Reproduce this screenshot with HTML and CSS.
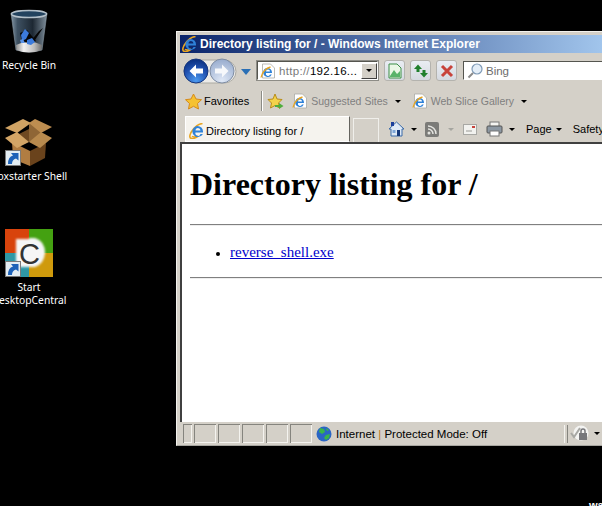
FILE: index.html
```html
<!doctype html>
<html lang="en">
<head>
  <meta charset="utf-8">
  <title>Directory listing for /</title>
  <link rel="stylesheet" href="styles.css">
</head>
<body>

  <!-- desktop icons -->
  <div class="desktop-icon bin">
    <svg class="icon48" viewBox="0 0 48 48">
      <defs>
        <linearGradient id="binBody" x1="0" x2="1" y1="0" y2="0">
          <stop offset="0" stop-color="#8497a6"/><stop offset=".18" stop-color="#3e5162"/><stop offset=".6" stop-color="#1d2833"/><stop offset="1" stop-color="#7f8f9c"/>
        </linearGradient>
        <linearGradient id="binFoot" x1="0" x2="1" y1="0" y2="0">
          <stop offset="0" stop-color="#8f8f8f"/><stop offset=".3" stop-color="#f2f2f2"/><stop offset=".7" stop-color="#bdbdbd"/><stop offset="1" stop-color="#6f6f6f"/>
        </linearGradient>
      </defs>
      <path d="M6 4 L11 41 Q24 45 37 41 L42 4 Z" fill="url(#binBody)" stroke="#8a99a5" stroke-width=".6"/>
      <path d="M11 36 Q24 29 37 36 L36.500 41 Q24 46 11.500 41 Z" fill="url(#binFoot)"/>
      <ellipse cx="24" cy="5" rx="17.500" ry="3.500" fill="#23435f" stroke="#b4c0c9" stroke-width="1.500"/>
      <path d="M15 24 L22 21 L31 32 L26 34 L17 33 Z M34 22 L38 19 L28 34 L25 33 Z" fill="#060606"/>
      <path d="M16 26 L20 20 L24 24 L21 30 L17 32 Z" fill="#3c7bdc"/>
      <path d="M22 31 L27 29 L30 33 L26 36 L22 35 Z" fill="#3c7bdc"/>
      <path d="M15 31 L18 30 L20 34 L16 34 Z" fill="#5a94e8"/>
    </svg>
    <span class="icon-label">Recycle Bin</span>
  </div>

  <div class="desktop-icon box">
    <svg class="icon48" viewBox="0 0 48 48">
      <path d="M7 24 L25 33 L25 48 L8 41 Z" fill="#b17d42"/>
      <path d="M25 33 L41 25 L40 40 L25 48 Z" fill="#6a431c"/>
      <path d="M12 17 L24 11 L36 17 L24 24 Z" fill="#6f4921"/>
      <path d="M24 4 L24 24 L36 17 L36 10 Z" fill="#8f6636"/>
      <path d="M0 10 L18 1 L26 5 L12 15 Z" fill="#d0a364"/>
      <path d="M24 5 L30 1 L47 9 L36 15 Z" fill="#bd8d50"/>
      <path d="M0 20 L12 14 L24 24 L12 30 Z" fill="#d3a566"/>
      <path d="M24 24 L36 14 L47 20 L35 30 Z" fill="#b88a4e"/>
    </svg>
    <svg class="shortcut" viewBox="0 0 16 16"><rect x=".5" y=".5" width="15" height="15" fill="#e3edf2" stroke="#7a7a7a"/><path d="M3 14 Q3 6.500 8 5.500 L6 3 H13.500 V10.500 L11 8.500 Q7 9.500 7 14 Z" fill="#1d62b8"/></svg>
    <span class="icon-label">Boxstarter Shell</span>
  </div>

  <div class="desktop-icon central">
    <svg class="icon48" viewBox="0 0 48 48">
      <defs>
        <filter id="soft"><feGaussianBlur stdDeviation="1"/></filter>
      </defs>
      <rect width="24" height="24" fill="#d8430c"/>
      <rect x="24" width="24" height="24" fill="#44a111"/>
      <rect y="24" width="24" height="24" fill="#2f98a6"/>
      <rect x="24" y="24" width="24" height="24" fill="#cf9a0c"/>
      <path d="M11 10 H24 V9 H30 Q40 12 40 24 Q39 35 30 38 H11 Z" fill="#f6f6f6" filter="url(#soft)"/>
      <text x="14" y="35" class="central-c">C</text>
    </svg>
    <svg class="shortcut" viewBox="0 0 16 16"><rect x=".5" y=".5" width="15" height="15" fill="#e3edf2" stroke="#7a7a7a"/><path d="M3 14 Q3 6.500 8 5.500 L6 3 H13.500 V10.500 L11 8.500 Q7 9.500 7 14 Z" fill="#1d62b8"/></svg>
    <span class="icon-label">Start<br>DesktopCentral</span>
  </div>

  <span class="corner-text">wa</span>

  <!-- the browser window -->
  <div class="window">
    <div class="titlebar">
      <svg class="ie16" viewBox="0 0 16 16"><use href="#ie"/></svg>
      <span>Directory listing for / - Windows Internet Explorer</span>
    </div>

    <div class="navbar">
      <div class="nav-orbs">
        <svg width="54" height="30" viewBox="0 0 54 30">
          <defs>
            <radialGradient id="orbBack" cx=".5" cy=".9" r=".9"><stop offset="0" stop-color="#4c9af0"/><stop offset=".6" stop-color="#1f4fae"/><stop offset="1" stop-color="#0b2f7e"/></radialGradient>
            <radialGradient id="orbFwd" cx=".5" cy=".9" r=".9"><stop offset="0" stop-color="#dfe8f6"/><stop offset="1" stop-color="#98acce"/></radialGradient>
          </defs>
          <rect x="1" y="4" width="52" height="23" rx="11.500" fill="#ecebe8" stroke="#aaa9a2"/>
          <circle cx="13" cy="15" r="12" fill="url(#orbBack)" stroke="#16377f"/>
          <path d="M6.500 15 L13 8.500 V12.500 H20 V17.500 H13 V21.500 Z" fill="#fff"/>
          <circle cx="39" cy="15" r="12" fill="url(#orbFwd)" stroke="#7f8da3"/>
          <path d="M45.500 15 L39 8.500 V12.500 H32 V17.500 H39 V21.500 Z" fill="#f6f8fb"/>
        </svg>
        <svg class="orb-arrow" width="10" height="6" viewBox="0 0 10 6"><path d="M0 0 H10 L5 6 Z" fill="#2a6fb5"/></svg>
      </div>

      <div class="address">
        <svg class="ie16" viewBox="1 0 15 16"><use href="#iedoc"/></svg>
        <span class="url"><span class="url-dim">http://</span>192.16...</span>
        <span class="drop-btn"><i class="caret"></i></span>
      </div>

      <div class="nav-btns">
        <span class="nav-btn"><svg width="16" height="16" viewBox="0 0 16 16"><path d="M2 1 H10 L14 5 V15 H2 Z" fill="#eaf7e6" stroke="#3c8f48"/><path d="M3 13 L7 7 L10 11 L13 8 V14 H3 Z" fill="#59b36a"/></svg></span>
        <span class="nav-btn"><svg width="16" height="16" viewBox="0 0 16 16"><path d="M1 6 L5 1.500 L9 6 H6.500 V9 H3.500 V6 Z" fill="#1f7f2c"/><path d="M15 10 L11 14.500 L7 10 H9.500 V7 H12.500 V10 Z" fill="#1f7f2c"/></svg></span>
        <span class="nav-btn"><svg width="14" height="14" viewBox="0 0 14 14"><path d="M2 2 L12 12 M12 2 L2 12" stroke="#c8433b" stroke-width="3"/></svg></span>
      </div>

      <div class="search">
        <svg width="16" height="16" viewBox="0 0 16 16"><circle cx="10" cy="6" r="5" fill="#e4eef8" stroke="#7f9ab6" stroke-width="1.200"/><path d="M6 10 L1.500 14.500" stroke="#8b8b8b" stroke-width="2"/></svg>
        <span>Bing</span>
      </div>
    </div>

    <div class="favbar">
      <svg width="17" height="17" viewBox="0 0 17 17"><path d="M8.500 1 L11 6 L16.500 6.700 L12.500 10.500 L13.500 16 L8.500 13.300 L3.500 16 L4.500 10.500 L.5 6.700 L6 6 Z" fill="#f5c232" stroke="#d68a1a"/></svg>
      <span class="fav-label">Favorites</span>
      <i class="fav-sep"></i>
      <svg width="17" height="17" viewBox="0 0 17 17"><path d="M8 1 L10 6 L15 6.500 L11.500 10 L12.500 15 L8 12.500 L3.500 15 L4.500 10 L1 6.500 L6 6 Z" fill="#f3d34b" stroke="#b98d1a"/><path d="M8 12 H12 V10 L16.500 13 L12 16 V14 H8 Z" fill="#4fae3c"/></svg>
      <span class="fav-item"><svg class="ie16" viewBox="1 0 15 16"><use href="#iedoc"/></svg>Suggested Sites<i class="caret"></i></span>
      <span class="fav-item"><svg class="ie16" viewBox="1 0 15 16"><use href="#iedoc"/></svg>Web Slice Gallery<i class="caret"></i></span>
    </div>

    <div class="tabbar">
      <div class="tab">
        <svg class="ie16" viewBox="0 0 16 16"><use href="#ie"/></svg>
        <span>Directory listing for /</span>
      </div>
      <div class="new-tab"></div>
      <div class="commands">
        <svg width="17" height="16" viewBox="0 0 17 16"><path d="M8.500 1 L1 8 H3 V15 H14 V8 H16 Z" fill="#dfe9f5" stroke="#3a6aa8"/><rect x="3" y="1" width="3" height="4" fill="#1c3f9c"/><rect x="9" y="9" width="3" height="6" fill="#16397a"/><rect x="4.500" y="9" width="3" height="3" fill="#7fa7d8"/></svg>
        <i class="caret"></i>
        <svg class="feed" width="14" height="15" viewBox="0 0 14 15"><rect width="14" height="15" rx="2" fill="#7b7b78"/><circle cx="4" cy="11" r="1.500" fill="#e4e4e0"/><path d="M3 7 A5 5 0 0 1 8 12 M3 4 A8 8 0 0 1 11 12" fill="none" stroke="#e4e4e0" stroke-width="1.500"/></svg>
        <i class="caret caret-off"></i>
        <svg class="mail" width="14" height="11" viewBox="0 0 14 11"><rect x=".5" y=".5" width="13" height="10" fill="#f2f2ef" stroke="#a8a8a4"/><rect x="9" y="2" width="3" height="2" fill="#c8433b"/><path d="M3 7 H9" stroke="#9a9a96"/></svg>
        <svg class="printer" width="17" height="16" viewBox="0 0 17 16"><rect x="4" y="1" width="9" height="5" fill="#f5f5f2" stroke="#777"/><rect x="1" y="5" width="15" height="7" rx="1" fill="#8d98a3" stroke="#555"/><rect x="4" y="10" width="9" height="5" fill="#fff" stroke="#777"/></svg>
        <i class="caret"></i>
        <span class="cmd page">Page<i class="caret"></i></span>
        <span class="cmd safety">Safety</span>
      </div>
    </div>

    <div class="viewport">
      <h1>Directory listing for /</h1>
      <hr>
      <ul>
        <li><a href="#">reverse_shell.exe</a></li>
      </ul>
      <hr>
    </div>

    <div class="statusbar">
      <i class="pane p1"></i><i class="pane"></i><i class="pane"></i><i class="pane"></i><i class="pane"></i><i class="pane"></i>
      <div class="zone">
        <svg width="16" height="16" viewBox="0 0 16 16"><circle cx="8" cy="8" r="7.500" fill="#2a66c4"/><path d="M4 2 L8 3 L9 6 L6 8 L3 6 Z M10 9 L14 8 L13 12 L10 14 L8 12 Z M10 2 L13 4 L11 5 Z" fill="#39b54a"/></svg>
        <span>Internet <b class="bar">|</b> Protected Mode: Off</span>
      </div>
      <div class="lock">
        <svg width="19" height="18" viewBox="0 0 19 18"><circle cx="11" cy="8" r="7.500" fill="#f4f4f2"/><path d="M1 8 L4 12 L10 3" fill="none" stroke="#a8a8a4" stroke-width="2"/><rect x="9" y="8" width="8" height="7" fill="#77777a"/><path d="M11 8 V6 A2 2 0 0 1 15 6 V8" fill="none" stroke="#77777a" stroke-width="1.500"/></svg>
        <i class="caret"></i>
      </div>
    </div>
  </div>

  <!-- shared IE logo -->
  <svg class="defs" width="0" height="0">
    <defs>
      <g id="ie">
        <path d="M13.500 .8 C10.500 .2 5.500 3.500 2 9.500 C.3 13 .5 15 2.300 15.400 C4.300 15.800 7 14.700 9 13.300 C6.300 14 3.700 14.300 3.200 13" fill="none" stroke="#e8a522" stroke-width="1.600"/>
        <path d="M8.500 3 A5.500 5.500 0 0 1 14 8.500 V9.500 H6.500 A2.500 2.500 0 0 0 11.500 11 H13.800 A5.500 5.500 0 1 1 8.500 3 Z M6.500 7.500 H11.500 A2.500 2.500 0 0 0 6.500 7.500 Z" fill="#2f82d8" fill-rule="evenodd"/>
      </g>
      <g id="iedoc">
        <path d="M3 1 H11 L15 5 V15 H3 Z" fill="#fff" stroke="#a9a9a4" stroke-width=".8"/>
        <path d="M8 5 A4.500 4.500 0 0 1 12.500 9.500 V10 H6.500 A2 2 0 0 0 10.500 11.500 H12.300 A4.500 4.500 0 1 1 8 5 Z M6.500 8.500 H10.500 A2 2 0 0 0 6.500 8.500 Z" fill="#2f82d8" fill-rule="evenodd"/>
        <path d="M1.500 14.500 C2.500 9 7 5 11 4" fill="none" stroke="#e8a522" stroke-width="1.300"/>
      </g>
    </defs>
  </svg>

</body>
</html>
```

FILE: styles.css
```css
html, body {
    margin:0;
    height:100%;
}
body {
    background:#000;
    color:#000;
    font-family:"Liberation Sans", Arial, sans-serif;
    font-size:10.500px;
    overflow:hidden;
    position:relative;
}
svg {
    display:block;
    flex:none;
}
.defs {
    position:absolute;
}

/* desktop icons sit on a free canvas */
.desktop-icon {
    position:absolute;
    width:110px;
    display:flex;
    flex-direction:column;
    align-items:center;
}
.bin {left:-26px; top:9px;}
.box {left:-26px; top:118px;}
.central {left:-26px; top:229px;}
.icon48 {
    width:48px;
    height:48px;
}
.shortcut {
    position:absolute;
    left:31px;
    top:32px;
    width:16px;
    height:16px;
}
.icon-label {
    margin-top:4px;
    color:#fff;
    text-align:center;
    line-height:13px;
    font-family:"Noto Sans", "Liberation Sans", sans-serif;
    font-size:10.300px;
}
.bin .icon-label {
    margin-top:2px;
}
.central-c {
    font-family:"Liberation Sans", sans-serif;
    font-size:29px;
    fill:#333;
}
.corner-text {
    position:absolute;
    left:589px;
    top:499px;
    color:#fff;
    font-weight:bold;
    font-size:11px;
}

/* window */
.window {
    position:absolute;
    left:176px;
    top:31px;
    width:440px;
    height:415px;
    box-sizing:border-box;
    background:#d4d0c8;
    border:1px solid #a7a6a0;
    border-top-color:#f2f1ed;
    border-left-color:#f2f1ed;
    padding:3px 0 0 3px;
    display:flex;
    flex-direction:column;
}
.titlebar {
    height:18px;
    flex:none;
    display:flex;
    align-items:center;
    gap:2px;
    padding-left:2px;
    background:linear-gradient(to right, #0a246a, #a6caf0);
    color:#fff;
    font-weight:bold;
    font-size:12px;
    white-space:nowrap;
}
.ie16 {
    width:16px;
    height:16px;
}

.navbar {
    height:31px;
    flex:none;
    display:flex;
    align-items:center;
    padding:2px 0 0 3px;
}
.nav-orbs {
    display:flex;
    align-items:center;
    gap:4px;
}
.orb-arrow {
    margin-top:2px;
}
.address {
    margin-left:6px;
    width:121px;
    height:19px;
    flex:none;
    box-sizing:border-box;
    display:flex;
    align-items:center;
    gap:3px;
    padding-left:2px;
    background:#fff;
    border:1px solid;
    border-color:#55554f #fff #fff #55554f;
    outline:1px solid #8d8c86;
}
.url {
    flex:1;
    font-size:11.500px;
    white-space:nowrap;
    letter-spacing:.3px;
}
.url-dim {
    color:#7a7a7a;
}
.drop-btn {
    width:16px;
    height:16px;
    box-sizing:border-box;
    display:flex;
    align-items:center;
    justify-content:center;
    background:#d4d0c8;
    border:1px solid;
    border-color:#fff #404040 #404040 #fff;
}
.caret {
    display:inline-block;
    border:solid transparent;
    border-width:3px 3px 0;
    border-top-color:#000;
    width:0;
    height:0;
}
.nav-btns {
    display:flex;
    gap:5px;
    margin-left:6px;
}
.nav-btn {
    width:21px;
    height:21px;
    box-sizing:border-box;
    display:flex;
    align-items:center;
    justify-content:center;
    background:linear-gradient(#e9edf3, #d5d9e0);
    border:1px solid #b4b3ae;
    border-radius:3px;
}
.search {
    margin-left:6px;
    width:250px;
    height:19px;
    flex:none;
    box-sizing:border-box;
    display:flex;
    align-items:center;
    gap:3px;
    padding-left:3px;
    background:#fff;
    border:1px solid;
    border-color:#55554f #fff #fff #55554f;
    color:#6d6d6d;
    font-size:11.500px;
}

.favbar {
    height:30px;
    flex:none;
    display:flex;
    align-items:center;
    padding-left:5px;
    color:#7f7f7f;
}
.fav-label {
    margin-left:2px;
    color:#000;
    font-size:11px;
}
.fav-sep {
    width:1px;
    height:20px;
    margin:0 5px 0 12px;
    background:#8b8b85;
    box-shadow:1px 0 #fff;
}
.fav-item {
    display:flex;
    align-items:center;
    gap:3px;
    margin-left:8px;
}
.fav-item + .fav-item {
    margin-left:11px;
}
.fav-item .caret {
    margin-left:4px;
}

.tabbar {
    height:26px;
    flex:none;
    display:flex;
    align-items:flex-end;
    padding-left:5px;
}
.tab {
    width:165px;
    height:26px;
    box-sizing:border-box;
    display:flex;
    align-items:center;
    gap:1px;
    padding:3px 0 0 3px;
    background:#f5f3ee;
    border:1px solid #fff;
    border-right-color:#65645f;
    font-size:11px;
}
.new-tab {
    width:26px;
    height:24px;
    margin-left:3px;
    box-sizing:border-box;
    border:1px solid #f0efeb;
    border-bottom:0;
    background:#d4d0c8;
}
.commands {
    display:flex;
    align-items:center;
    align-self:center;
    margin-left:9px;
    font-size:11px;
    white-space:nowrap;
}
.commands .caret {
    margin-left:6px;
}
.commands .feed {
    margin-left:8px;
}
.commands .caret-off {
    margin-left:9px;
    border-top-color:#a5a5a0;
}
.commands .mail {
    margin-left:9px;
}
.commands .printer {
    margin-left:9px;
}
.cmd {
    display:flex;
    align-items:center;
    margin-left:11px;
}
.commands .cmd .caret {
    margin-left:4px;
}

.viewport {
    flex:1;
    min-height:0;
    box-sizing:border-box;
    padding:8px;
    background:#fff;
    border-top:2px solid #404040;
    border-left:2px solid #404040;
    font-family:"Liberation Serif", "Times New Roman", serif;
    font-size:15px;
}
.viewport h1 {
    margin:14px 0 21px;
    font-size:32px;
    line-height:37px;
}
.viewport hr {
    margin:0;
    border:0;
    border-top:1px solid #808080;
    border-bottom:1px solid #eee;
}
.viewport ul {
    margin:17px 0 15px;
    padding-left:40px;
}
.viewport li {
    line-height:19px;
}
.viewport li::marker {
    font-size:12px;
}
.viewport a {
    color:#00c;
}

.statusbar {
    height:23px;
    flex:none;
    display:flex;
    align-items:center;
    gap:2px;
    box-sizing:border-box;
    padding-left:3px;
}
.pane {
    width:21px;
    height:18px;
    flex:none;
    border:solid #85847e;
    border-width:1px 0 0 1px;
    box-shadow:inset -1px -1px #f4f3ef;
}
.p1 {
    width:8px;
}
.zone {
    flex:none;
    width:251px;
    height:18px;
    display:flex;
    align-items:center;
    gap:4px;
    padding-left:2px;
    box-sizing:border-box;
    border-right:1px solid #f4f3ef;
    font-size:11.500px;
}
.bar {
    color:#c07a20;
    font-weight:normal;
}
.lock {
    height:18px;
    width:34px;
    flex:none;
    display:flex;
    align-items:center;
    gap:5px;
    padding-left:2px;
    border-left:1px solid #85847e;
}
```
